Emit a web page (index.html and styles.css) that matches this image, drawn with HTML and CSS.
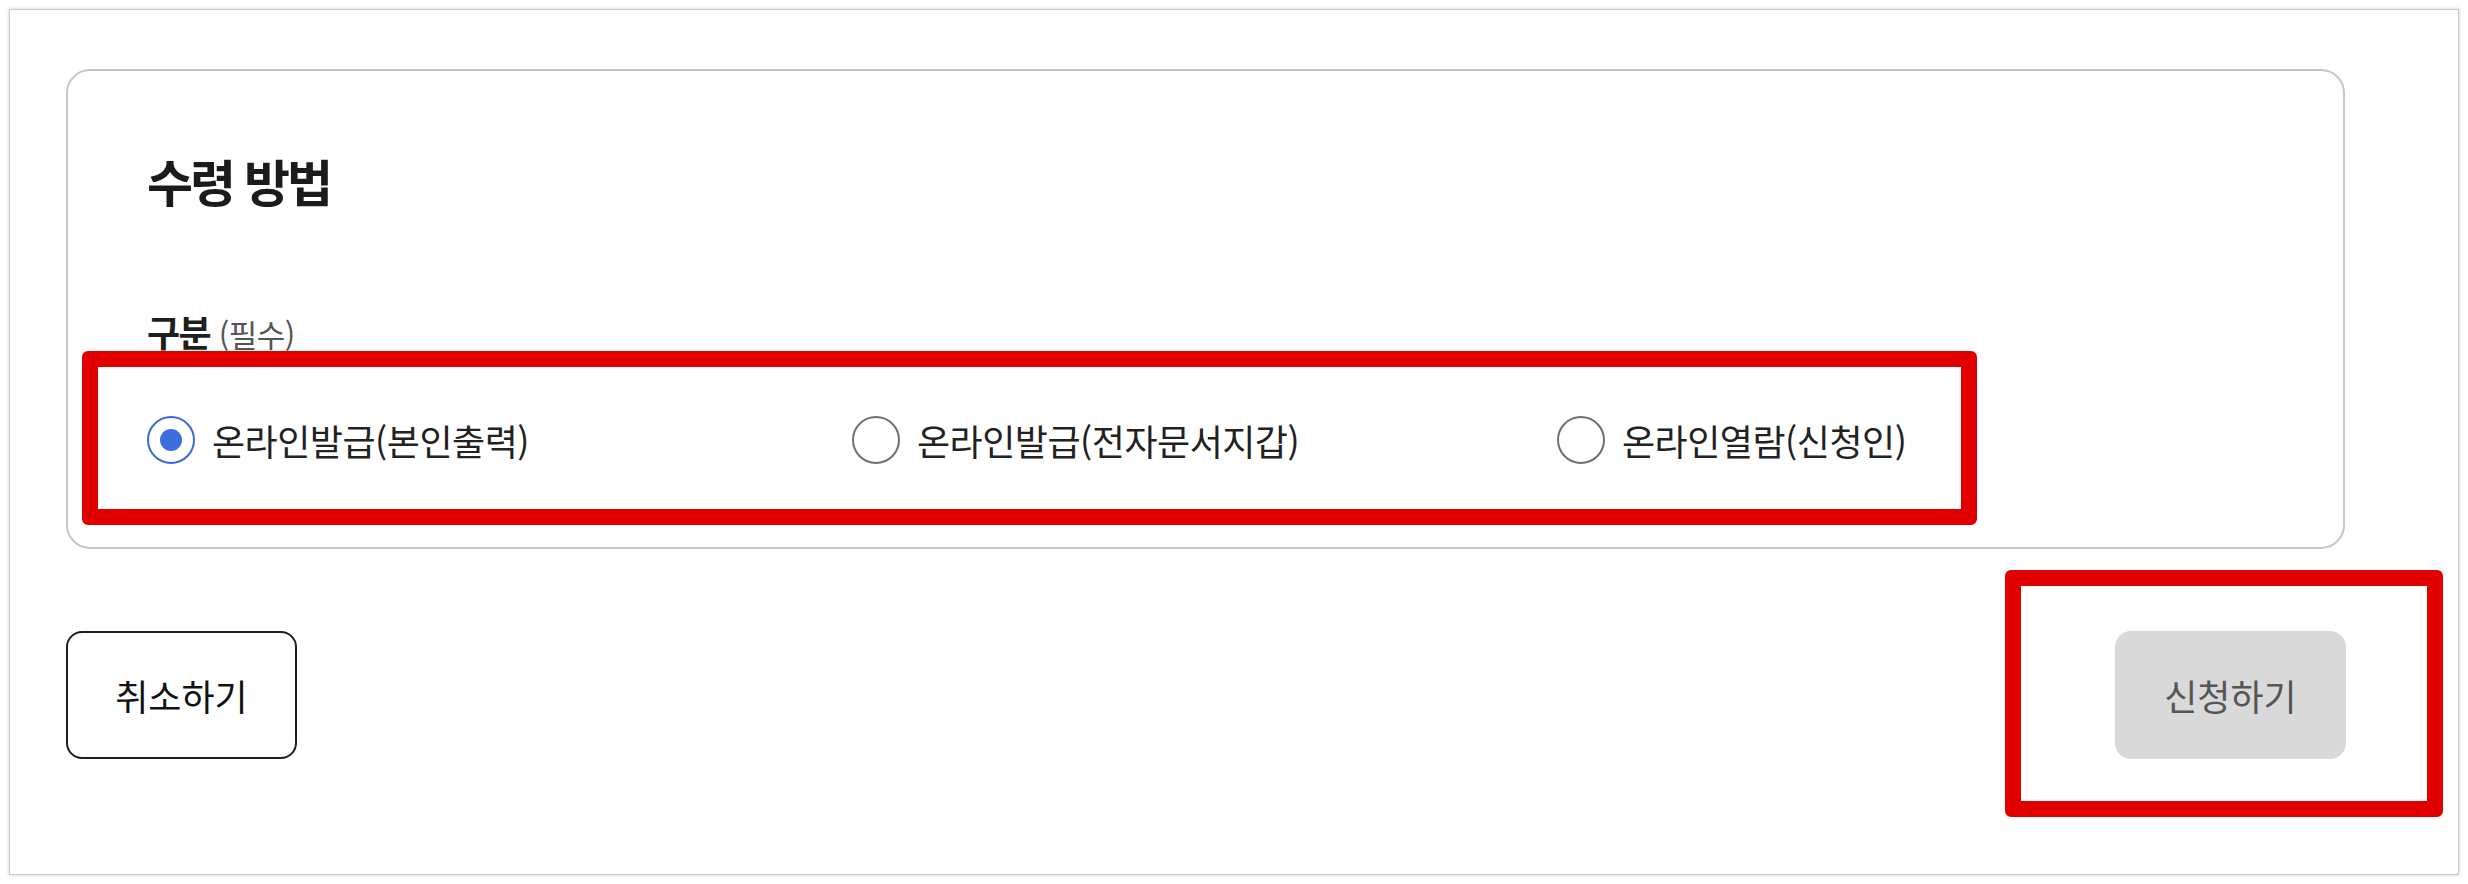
FILE: index.html
```html
<!DOCTYPE html>
<html lang="ko">
<head>
<meta charset="utf-8">
<title>수령 방법</title>
<link rel="stylesheet" href="styles.css">
</head>
<body>
<div class="frame">
  <section class="card">
    <h2 class="title">수령 방법</h2>
    <div class="field-label">구분 <span class="req">(필수)</span></div>
    <div class="options">
      <label class="option">
        <span class="radio checked"><span class="dot"></span></span>
        <span class="opt-text">온라인발급(본인출력)</span>
      </label>
      <label class="option">
        <span class="radio"></span>
        <span class="opt-text">온라인발급(전자문서지갑)</span>
      </label>
      <label class="option">
        <span class="radio"></span>
        <span class="opt-text">온라인열람(신청인)</span>
      </label>
    </div>
  </section>
  <div class="actions">
    <button class="btn btn-cancel" type="button">취소하기</button>
    <button class="btn btn-submit" type="button">신청하기</button>
  </div>
</div>
<div class="mark mark-options"></div>
<div class="mark mark-submit"></div>
</body>
</html>
```
FILE: styles.css
```css
html, body {
  margin: 0;
  padding: 0;
  background: #ffffff;
}
body {
  font-family: "Noto Sans CJK KR", "Noto Sans", sans-serif;
  color: #222222;
  position: relative;
  width: 2468px;
  height: 884px;
  overflow: hidden;
}
.frame {
  box-sizing: border-box;
  margin: 9px 0 0 9px;
  width: 2450px;
  height: 866px;
  border: 1px solid #cacaca;
  box-shadow: 0 0 4px rgba(0, 0, 0, 0.18);
  background: #ffffff;
  padding: 59px 0 0 56px;
}
.card {
  box-sizing: border-box;
  width: 2279px;
  height: 480px;
  border: 2px solid #c6c6c6;
  border-radius: 24px;
  padding: 78px 79px 0 79px;
  display: flex;
  flex-direction: column;
}
.title {
  margin: 0;
  font-size: 50px;
  line-height: 62px;
  font-weight: 700;
  letter-spacing: -3px;
  color: #1b1b1b;
}
.field-label {
  margin-top: 99px;
  font-size: 36px;
  line-height: 42px;
  font-weight: 700;
  color: #1e1e1e;
  letter-spacing: -1.5px;
}
.req {
  font-size: 31px;
  font-weight: 400;
  color: #555555;
  letter-spacing: -0.5px;
}
.options {
  margin-top: 61px;
  display: grid;
  grid-template-columns: 705px 705px 705px;
  height: 48px;
}
.option {
  display: flex;
  align-items: center;
  gap: 17px;
}
.radio {
  box-sizing: border-box;
  width: 48px;
  height: 48px;
  border: 2px solid #707070;
  border-radius: 50%;
  display: flex;
  align-items: center;
  justify-content: center;
  flex: none;
}
.radio.checked {
  border-color: #3b6bd6;
}
.dot {
  width: 22px;
  height: 22px;
  border-radius: 50%;
  background: #3c6fdc;
}
.opt-text {
  font-size: 36px;
  line-height: 48px;
  color: #222222;
  letter-spacing: -0.5px;
}
.actions {
  width: 2280px;
  margin-top: 82px;
  display: flex;
  justify-content: space-between;
}
.btn {
  box-sizing: border-box;
  width: 231px;
  height: 128px;
  border-radius: 16px;
  font-family: "Noto Sans CJK KR", "Noto Sans", sans-serif;
  font-size: 36px;
  padding: 0;
  cursor: pointer;
}
.btn-cancel {
  border: 2px solid #1f1f1f;
  background: #ffffff;
  color: #111111;
}
.btn-submit {
  border: none;
  background: #d9d9d9;
  color: #555555;
}
.mark {
  position: absolute;
  box-sizing: border-box;
  border: 16px solid #e10000;
  border-radius: 6px;
}
.mark-options {
  left: 82px;
  top: 351px;
  width: 1895px;
  height: 174px;
}
.mark-submit {
  left: 2005px;
  top: 570px;
  width: 438px;
  height: 247px;
}
```
